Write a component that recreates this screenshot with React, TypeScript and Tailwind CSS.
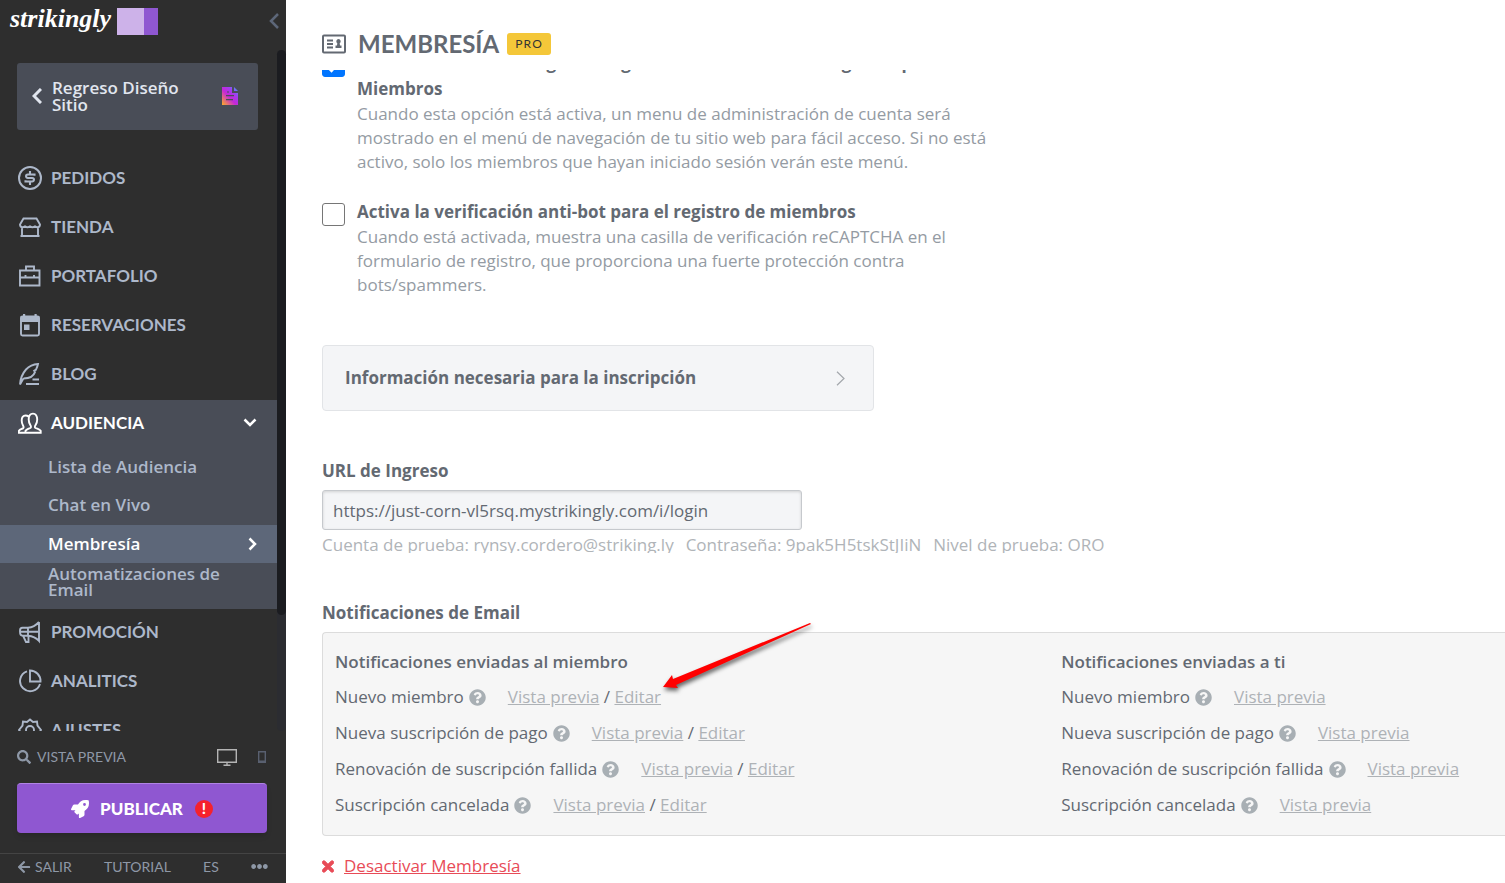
import type { ReactNode } from "react";
import { FaArrowLeft, FaEllipsisH, FaQuestionCircle, FaRocket, FaSearch, FaTimes } from "react-icons/fa";

type IconProps = { children: ReactNode; className?: string };

function Icon({ children, className = "size-6" }: IconProps) {
  return (
    <svg
      viewBox="0 0 24 24"
      fill="none"
      stroke="currentColor"
      strokeWidth="1.9"
      className={`shrink-0 ${className}`}
      aria-hidden="true"
    >
      {children}
    </svg>
  );
}

const icons = {
  orders: (
    <Icon>
      <circle cx="12" cy="12" r="11" strokeWidth="2" />
      <path d="M16.500 9.800V8.500H9.800a1.750 1.750 0 0 0 0 3.500h4.400a1.750 1.750 0 0 1 0 3.500H7.500v-1.300M12 5v3.500M12 15.500V19" strokeWidth="2.100" />
    </Icon>
  ),
  store: (
    <Icon>
      <path d="M5.500 3.500h13l3.500 6c0 1.600-1 2.700-2.500 2.700S17 11.500 17 10.500c0 1-1 1.700-2.500 1.700S12 11.500 12 10.500c0 1-1 1.700-2.500 1.700S7 11.500 7 10.500c0 1-1 1.700-2.500 1.700S2 11.100 2 9.500zM4 12v9M20 12v9M2.500 21h19" />
    </Icon>
  ),
  portfolio: (
    <Icon>
      <path d="M2 6.500h19.500v15H2zM8 6.500V2.500h8v4M2 13.500h19.500M7.500 11v2.500M16 11v2.500" />
    </Icon>
  ),
  bookings: (
    <Icon>
      <rect x="3" y="3.500" width="18" height="19" rx="1.500" />
      <path d="M2.500 3.500h19V9h-19zM5 1h2.200v3H5zM16.500 1h2.200v3h-2.200zM6 11.500h5.500V17H6z" fill="currentColor" stroke="none" />
    </Icon>
  ),
  blog: (
    <Icon>
      <path d="M2 22.500c.300-4.500 2-10.500 6-15C11.500 3.800 15.500 2.300 20 2c-.500 2.500-1.200 4-2 5.700l-1.800 1 .900 1.200c-1.500 4.500-5 6.600-11.600 6.600M2 22.500c1.300-2.400 2.300-4.200 3.500-6M14.500 17.500H21M8 22h13" />
    </Icon>
  ),
  audience: (
    <Icon>
      <path d="M7.500 21.800h15.200v-2c-1.200-1.700-3.700-2-5.500-3.100-.700-.600-.200-1.600.4-2.600 1-1.600 1.600-3 1.600-5.500 0-3.700-1.500-6-4.200-6s-4.300 2.300-4.300 6c0 2.500.7 4 1.600 5.500.600 1 1 2 .3 2.600-1.700 1.100-4 1.500-5.100 3.100zM7.500 21.800H.9v-2c1-1.400 3-1.800 4.400-2.700.7-.7.300-1.500-.3-2.600-.8-1.300-1.300-3-1.300-4.900C3.700 6.300 5 4.500 7.500 4.500c1.200 0 2.200.3 3 1" />
    </Icon>
  ),
  promo: (
    <Icon>
      <path d="M21 2v19c-3-3.500-6.500-5-11-5.300M21 2c-3.500 4-7 5.500-11 5.800H4.500C3 7.800 2 8.800 2 10.500v1.300c0 2.400 1 3.900 2.700 3.900H10M10 7.800v7.900M5 15.700 8 22h2.500v-6M2 11.800h18" />
    </Icon>
  ),
  analytics: (
    <Icon>
      <path d="M9 2.300A10.200 10.200 0 1 0 22 15M12 1.500v11h10.500A10.500 10.500 0 0 0 12 1.500z" />
    </Icon>
  ),
  settings: (
    <Icon>
      <path d="m12 1.500 3 2.500 4-.5.500 4L23 12l-3.500 4.500-.5 4-4-.5-3 2.500-3-2.500-4 .5-.500-4L1 12l3.500-4.500.500-4 4 .5z" />
      <circle cx="12" cy="12" r="4" />
    </Icon>
  ),
};

const mainNav = [
  { label: "PEDIDOS", icon: icons.orders },
  { label: "TIENDA", icon: icons.store },
  { label: "PORTAFOLIO", icon: icons.portfolio },
  { label: "RESERVACIONES", icon: icons.bookings },
  { label: "BLOG", icon: icons.blog },
];

const lowerNav = [
  { label: "PROMOCIÓN", icon: icons.promo },
  { label: "ANALITICS", icon: icons.analytics },
  { label: "AJUSTES", icon: icons.settings },
];

const emails = [
  "Nuevo miembro",
  "Nueva suscripción de pago",
  "Renovación de suscripción fallida",
  "Suscripción cancelada",
];

function NavItem({ label, icon }: { label: string; icon: ReactNode }) {
  return (
    <a href="#" className="flex h-[49px] items-center gap-[9px] pb-1 pl-[18px] font-['Lato',sans-serif] text-[17px] font-bold text-[#adb8ca]">
      {icon}
      {label}
    </a>
  );
}

function Sidebar() {
  return (
    <aside className="flex w-[286px] shrink-0 flex-col bg-[#2e2e2e] text-[#adb8ca]">
      <header className="flex h-[50px] shrink-0 items-start pt-2 pl-[10px]">
        <span className="font-['Liberation_Serif',serif] text-[26px] leading-[22px] font-bold text-white italic">
          strikingly
        </span>
        <span className="ml-[6px] flex h-[27px] w-[41px] bg-[#8f57d1]">
          <span className="w-[27px] bg-[#cdb2e9]" />
        </span>
        <button className="mt-[5px] ml-auto pr-[7px] text-[#5d6779]" aria-label="Contraer">
          <svg viewBox="0 0 10 16" className="h-4 w-[10px]" fill="none" stroke="currentColor" strokeWidth="2.500">
            <path d="M9 1 2 8l7 7" />
          </svg>
        </button>
      </header>

      <div className="flex min-h-0 flex-1">
        <nav className="min-w-0 flex-1 overflow-hidden">
          <a
            href="#"
            className="mt-[13px] mr-[19px] mb-[25px] ml-[17px] flex h-[67px] items-center rounded-[3px] bg-[#494d57] pr-5 pb-[2px] pl-[15px] text-[17px] leading-[17px] font-semibold text-[#e1e6ef]"
          >
            <svg viewBox="0 0 10 16" className="mr-[10px] h-4 w-[10px] shrink-0" fill="none" stroke="currentColor" strokeWidth="3">
              <path d="M9 1 2 8l7 7" />
            </svg>
            <span className="flex-1 pr-6">Regreso Diseño Sitio</span>
            <svg viewBox="0 0 16 18" className="h-[18px] w-4 shrink-0" aria-hidden="true">
              <defs>
                <linearGradient id="page" x1="0" y1="1" x2="1" y2="0">
                  <stop offset="0" stopColor="#ffb020" />
                  <stop offset=".45" stopColor="#c527d8" />
                  <stop offset=".7" stopColor="#a33cf0" />
                  <stop offset="1" stopColor="#3aa8ff" />
                </linearGradient>
              </defs>
              <path
                fill="url(#page)"
                fillRule="evenodd"
                d="M0 0h10v6h6v12H0zM12 0l4 4h-4zM5 4.500v1h2v-1zM4 8v1.200h8V8zM4 12v1.200h7V12z"
              />
            </svg>
          </a>

          {mainNav.map((item) => (
            <NavItem key={item.label} {...item} />
          ))}

          <div className="bg-[#494d57] text-[17px] font-semibold">
            <a href="#" className="flex h-[49px] items-center gap-[9px] pr-5 pb-1 pl-[18px] font-['Lato',sans-serif] font-bold text-white">
              {icons.audience}
              <span className="flex-1">AUDIENCIA</span>
              <svg viewBox="0 0 14 9" className="h-[9px] w-[14px]" fill="none" stroke="currentColor" strokeWidth="2.500">
                <path d="m1.500 1.500 5.500 5.500 5.500-5.500" />
              </svg>
            </a>
            <a href="#" className="flex h-[38px] items-center pb-[2px] pl-12">Lista de Audiencia</a>
            <a href="#" className="flex h-[38px] items-center pb-[2px] pl-12">Chat en Vivo</a>
            <a href="#" className="flex h-[38px] items-center justify-between bg-[#5d6779] pr-5 pl-12 text-white">
              Membresía
              <svg viewBox="0 0 9 14" className="h-[14px] w-[9px]" fill="none" stroke="currentColor" strokeWidth="2.500">
                <path d="M1.500 1.500 7 7l-5.500 5.500" />
              </svg>
            </a>
            <a href="#" className="flex h-[46px] items-start pt-[3px] pr-6 pl-12 leading-[16px]">
              Automatizaciones de Email
            </a>
          </div>

          {lowerNav.map((item) => (
            <NavItem key={item.label} {...item} />
          ))}
        </nav>
        <div className="w-[9px] rounded-full bg-[#2b2c31]">
          <div className="h-[83%] rounded-full bg-[#1b1c20]" />
        </div>
      </div>

      <div className="flex h-[52px] shrink-0 items-center pr-5 pl-[17px] font-['Lato',sans-serif] text-[14px] text-[#8e98a7]">
        <FaSearch className="mr-[6px] size-[14px]" />
        VISTA PREVIA
        <button className="ml-auto text-[#b4b4b4]" aria-label="Escritorio">
          <svg viewBox="0 0 20 17" className="h-[17px] w-5" fill="none" stroke="currentColor" strokeWidth="1.400">
            <path d="M.700.700h18.600v12.600H.700zM10 13v3M6.500 16.300h7" />
          </svg>
        </button>
        <button className="ml-[21px] text-[#596070]" aria-label="Móvil">
          <svg viewBox="0 0 8 12" className="h-3 w-2" fill="none" stroke="currentColor" strokeWidth="1.400">
            <path d="M.700.700h6.600v10.600H.700zM.700 10.300h6.600" />
          </svg>
        </button>
      </div>
      <button className="mr-[19px] ml-[17px] flex h-[50px] shrink-0 items-center justify-center rounded-[4px] border-t border-[#b083e4] bg-[#8f57d1] font-['Lato',sans-serif] text-[17px] font-black text-white shadow-md">
        <FaRocket className="mr-[11px] size-[18px]" />
        PUBLICAR
        <span className="ml-3 flex size-[18px] items-center justify-center rounded-full bg-[#f5222d] text-[15px] leading-none">!</span>
      </button>
      <footer className="mt-5 flex h-[30px] shrink-0 items-center justify-between border-t border-[#444] pr-[18px] pb-1 pl-[17px] font-['Lato',sans-serif] text-[14px] text-[#8e98a7]">
        <a href="#" className="flex items-center gap-1">
          <FaArrowLeft className="size-[14px]" />
          SALIR
        </a>
        <a href="#">TUTORIAL</a>
        <a href="#">ES</a>
        <button aria-label="Más">
          <FaEllipsisH className="size-[17px]" />
        </button>
      </footer>
    </aside>
  );
}

type OptionProps = { id: string; title: string; text: string; checked?: boolean };

function Option({ id, title, text, checked }: OptionProps) {
  return (
    <div className="mb-[25px] flex max-w-[680px] gap-3">
      <span className="relative mt-1 size-[23px] shrink-0">
        <input
          id={id}
          type="checkbox"
          defaultChecked={checked}
          className="peer size-[23px] appearance-none rounded-[3px] border border-[#767676] bg-white checked:border-[#0075ff] checked:bg-[#0075ff]"
        />
        <svg
          viewBox="0 0 23 23"
          className="pointer-events-none absolute inset-0 hidden size-[23px] peer-checked:block"
          fill="none"
          stroke="white"
          strokeWidth="3"
        >
          <path d="m4 11 5.500 5.500L19 6" />
        </svg>
      </span>
      <div>
        <label htmlFor={id} className="block leading-[26px] font-bold">{title}</label>
        <p className="text-[#949ba3]">{text}</p>
      </div>
    </div>
  );
}

function Arrow() {
  return (
    <svg
      viewBox="0 0 156 76"
      className="pointer-events-none absolute bottom-3 left-full h-[76px] w-[156px] drop-shadow-[1px_3px_2px_rgba(0,0,0,0.6)]"
      aria-hidden="true"
    >
      <path d="M2 66 11 54l1 4L149 2 150 3 15 64l2 3z" fill="#ff0000" />
    </svg>
  );
}

function EmailList({ title, editable, marked }: { title: string; editable?: boolean; marked?: string }) {
  return (
    <div>
      <h3 className="h-[35px] leading-[35px] font-semibold">{title}</h3>
      <ul>
        {emails.map((name) => (
          <li key={name} className="flex h-9 items-center whitespace-pre">
            {name}
            <FaQuestionCircle className="mr-[22px] ml-[5px] size-[17px] text-[#a8afb4]" />
            <a href="#" className="text-[#aeb2b6] underline">Vista previa</a>
            {editable && (
              <>
                {" / "}
                <span className="relative">
                  <a href="#" className="text-[#aeb2b6] underline">Editar</a>
                  {name === marked && <Arrow />}
                </span>
              </>
            )}
          </li>
        ))}
      </ul>
    </div>
  );
}

export default function App() {
  return (
    <div className="flex h-screen overflow-hidden bg-white font-['Open_Sans',sans-serif] text-[17px] leading-6 text-[#636972]">
      <Sidebar />

      <main className="flex min-w-0 flex-1 flex-col pl-9">
        <header className="flex h-[70px] shrink-0 items-center pt-[18px]">
          <Icon className="mr-3 size-6">
            <rect x="1" y="3.500" width="22" height="17" rx="1" strokeWidth="2" />
            <path d="M5 8.500h6M5 12h6M5 15.500h6" />
            <path d="M16.500 7a2.300 2.300 0 0 1 1.200 4.200l.3 2.300h1.500V16h-6v-2.500H15l.3-2.300A2.300 2.300 0 0 1 16.500 7z" fill="currentColor" stroke="none" />
          </Icon>
          <h1 className="font-['Lato',sans-serif] text-[24px] leading-6 font-bold">MEMBRESÍA</h1>
          <span className="ml-2 flex h-[22px] items-center rounded-[3px] bg-[#f4c739] px-2 font-['Lato',sans-serif] text-[12px] tracking-widest text-[#333]">
            PRO
          </span>
        </header>

        <div className="min-h-0 flex-1 overflow-hidden">
          <div className="-mt-5">
            <Option
              id="menu"
              checked
              title="Mostrar el Botón de Ingreso/Registro en el Menú de Navegación para Miembros"
              text="Cuando esta opción está activa, un menu de administración de cuenta será mostrado en el menú de navegación de tu sitio web para fácil acceso. Si no está activo, solo los miembros que hayan iniciado sesión verán este menú."
            />
            <Option
              id="antibot"
              title="Activa la verificación anti-bot para el registro de miembros"
              text="Cuando está activada, muestra una casilla de verificación reCAPTCHA en el formulario de registro, que proporciona una fuerte protección contra bots/spammers."
            />
          </div>

          <button className="mt-12 flex h-[66px] w-full max-w-[552px] items-center justify-between rounded-[4px] border border-[#e2e4e7] bg-[#f4f5f7] pr-7 pl-[22px] font-bold">
            Información necesaria para la inscripción
            <svg viewBox="0 0 9 15" className="h-[15px] w-[9px] text-[#a3a7ac]" fill="none" stroke="currentColor" strokeWidth="1.200">
              <path d="m1 .800 7 6.700-7 6.700" />
            </svg>
          </button>

          <label htmlFor="url" className="mt-12 block font-bold">URL de Ingreso</label>
          <input
            id="url"
            readOnly
            value="https://just-corn-vl5rsq.mystrikingly.com/i/login"
            className="mt-[7px] block h-10 w-full max-w-[480px] rounded-[3px] border border-[#c6c9cd] bg-[#f4f5f7] px-[10px] shadow-[inset_0_1px_3px_rgba(0,0,0,0.15)]"
          />
          <p className="mt-[6px] flex h-[17px] gap-3 overflow-hidden leading-[17px] whitespace-nowrap text-[#b0b4b8]">
            <span>Cuenta de prueba: rynsy.cordero@striking.ly</span>
            <span>Contraseña: 9pak5H5tskStJIiN</span>
            <span>Nivel de prueba: ORO</span>
          </p>

          <h2 className="mt-12 font-bold">Notificaciones de Email</h2>
          <section className="mt-[7px] grid grid-cols-[18fr_11fr] rounded-l-[4px] border border-r-0 border-[#dcdcdc] bg-[#f6f6f6] pt-[11px] pb-3 pl-3">
            <EmailList title="Notificaciones enviadas al miembro" editable marked="Nuevo miembro" />
            <EmailList title="Notificaciones enviadas a ti" />
          </section>

          <a href="#" className="mt-[18px] flex w-fit items-center gap-[10px] text-[#e84b57]">
            <FaTimes className="h-[17px] w-3" stroke="currentColor" strokeWidth="30" />
            <span className="underline">Desactivar Membresía</span>
          </a>
        </div>
      </main>
    </div>
  );
}
